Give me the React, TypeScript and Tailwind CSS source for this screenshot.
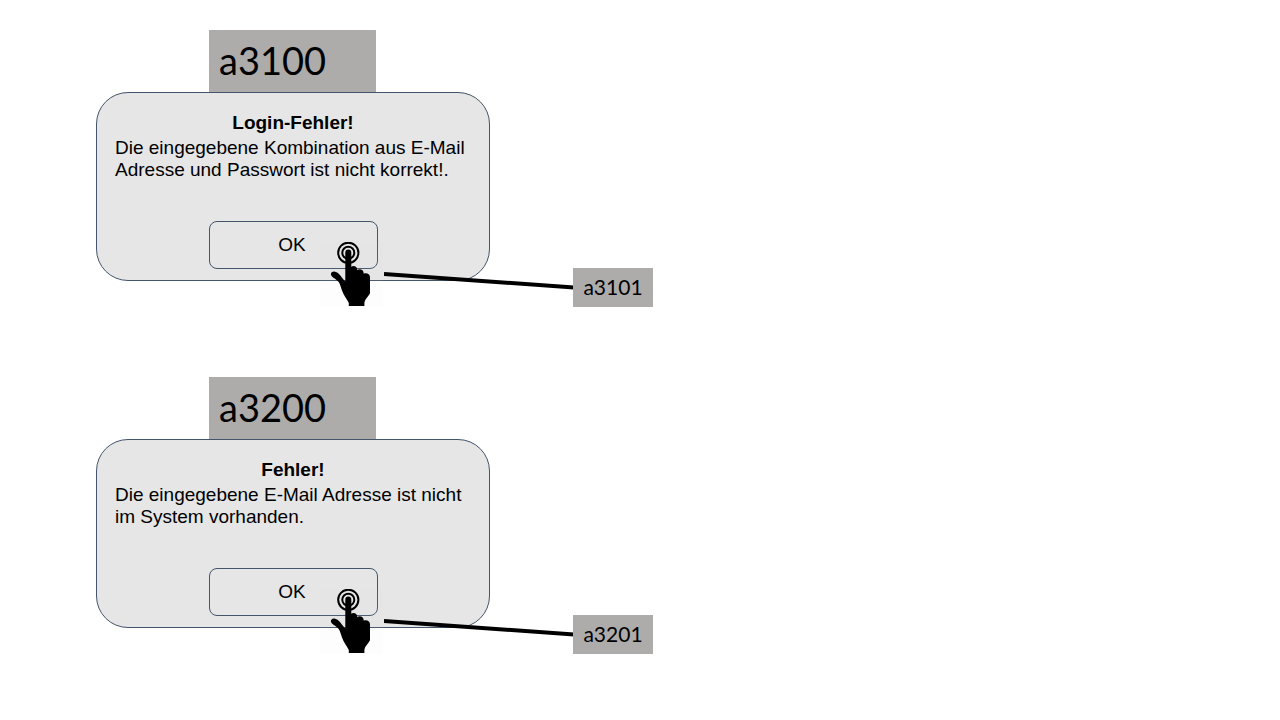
type DialogProps = {
  id: string;
  title: string;
  message: string;
  actionId: string;
};

function TouchHand() {
  return (
    <svg
      viewBox="0 0 64 64"
      aria-hidden="true"
      className="pointer-events-none absolute -right-1.5 -bottom-[37px] h-16 w-16"
    >
      <rect width="63" height="64" fill="#dcdcdc" fillOpacity="0.06" />
      <circle cx="28.3" cy="10.8" r="10.1" fill="none" stroke="#000" strokeWidth="2" />
      <circle cx="28.3" cy="10.8" r="6" fill="none" stroke="#000" strokeWidth="2" />
      <path d="M25.3 10.4a3 3 0 0 1 6 0V24.8C33.4 22.9 37.3 24.2 37.3 28C39.8 26.4 43.8 27.6 43.8 31.7C46.5 30.4 50 32.2 50 35V51.3C48.6 54.5 45 57.2 44.4 60.5V64H28.8V61C26.6 56.8 23.4 52.7 21.8 48C20.8 45 20.2 42 18.5 39.7C16.4 37.2 13.7 36 12 34.4C9.6 32 11.5 29.5 14.2 29.6C19 30 22.2 36.8 25.3 39.6Z" />
    </svg>
  );
}

function ErrorDialog({ id, title, message, actionId }: DialogProps) {
  return (
    <section className="relative w-[394px]">
      <div className="ml-[113px] flex h-[62px] w-[167px] items-center bg-[#adacaa] pb-0.5 pl-2.5 font-['Lato',sans-serif] text-[38px] leading-none">
        {id}
      </div>
      <div
        role="alertdialog"
        aria-labelledby={`${id}-title`}
        aria-describedby={`${id}-message`}
        className="flex min-h-[189px] flex-col rounded-[32px] border border-[#44546a] bg-[#e6e6e6] px-[18px] pt-[19px] pb-[11px]"
      >
        <h2 id={`${id}-title`} className="text-center text-[19px] leading-[22px] font-bold">
          {title}
        </h2>
        <p id={`${id}-message`} className="mt-[3px] text-[19px] leading-[22px]">
          {message}
        </p>
        <div className="relative mt-auto w-[169px] self-center">
          <button
            type="button"
            className="h-12 w-full rounded-lg border border-[#44546a] pr-0.5 text-[19px] leading-[22px]"
          >
            OK
          </button>
          <TouchHand />
        </div>
      </div>
      <svg
        viewBox="0 0 190 22"
        aria-hidden="true"
        className="absolute -bottom-[11px] left-72 h-[22px] w-[190px]"
      >
        <line x1="0" y1="4" x2="190" y2="17.5" stroke="#000" strokeWidth="4" />
      </svg>
      <div className="absolute -bottom-[26px] left-full ml-[83px] flex h-[39px] w-20 items-center justify-center bg-[#adacaa] pb-0.5 font-['Lato',sans-serif] text-[21px] leading-none">
        {actionId}
      </div>
    </section>
  );
}

export default function App() {
  return (
    <main className="flex min-h-screen flex-col gap-24 bg-white pt-[30px] pb-16 pl-24 font-['Liberation_Sans',Arial,sans-serif] text-black">
      <ErrorDialog
        id="a3100"
        title="Login-Fehler!"
        message="Die eingegebene Kombination aus E-Mail Adresse und Passwort ist nicht korrekt!."
        actionId="a3101"
      />
      <ErrorDialog
        id="a3200"
        title="Fehler!"
        message="Die eingegebene E-Mail Adresse ist nicht im System vorhanden."
        actionId="a3201"
      />
    </main>
  );
}
